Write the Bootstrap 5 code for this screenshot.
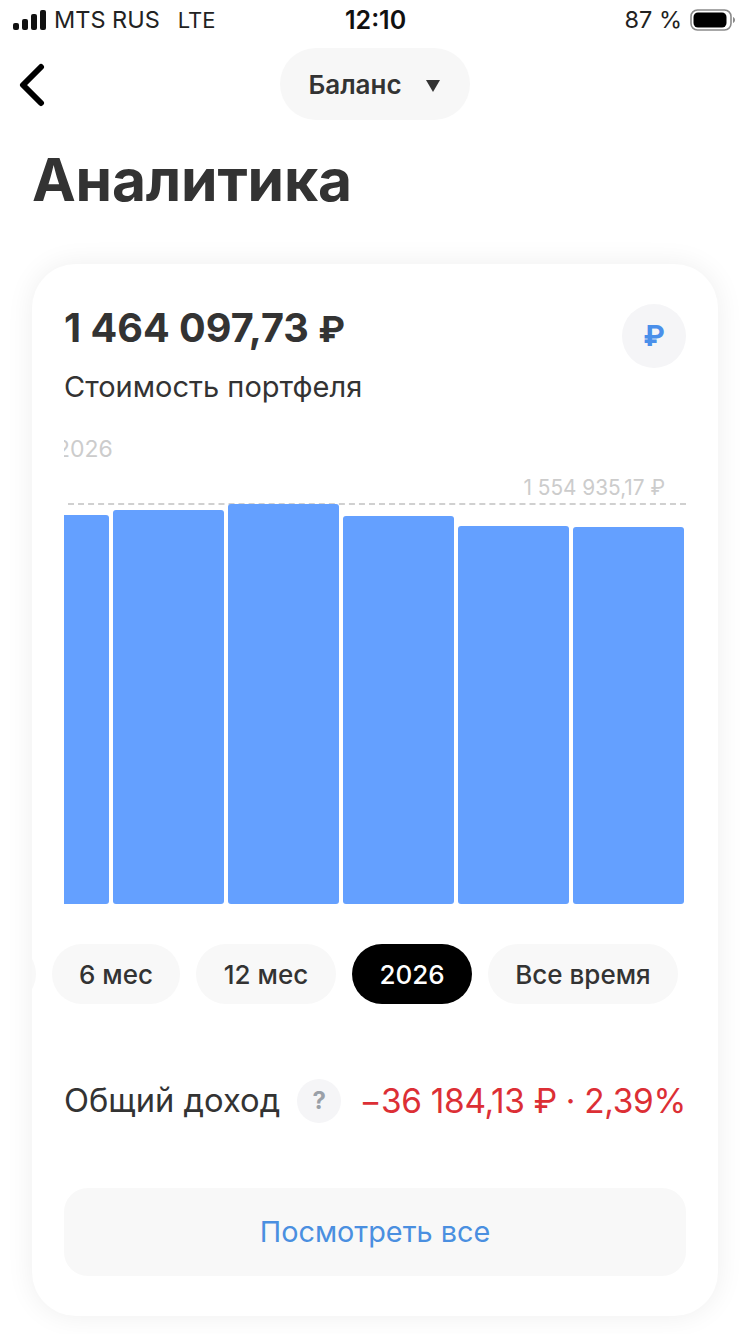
<!DOCTYPE html>
<html lang="ru">
<head>
    <meta charset="UTF-8">
    <meta name="viewport" content="width=device-width, initial-scale=1.0">
    <title>Аналитика</title>
    <link href="https://cdn.jsdelivr.net/npm/bootstrap@5.3.0/dist/css/bootstrap.min.css" rel="stylesheet">
    <style>
        body { width: 750px; height: 1334px; overflow: hidden; background: #fff; font-family: Inter, "Noto Sans", sans-serif; color: #333; }
        .status-row { height: 40px; padding: 0 14px 0 13px; font-size: 23.5px; color: #222; }
        .status-left { width: 290px; gap: 7px; }
        .status-lte { margin-left: 11px; font-size: 22px; }
        .status-time { font-size: 25px; font-weight: 600; color: #111; flex: 1; padding: 2px 0 0 42px; }
        .top-row { height: 72px; margin-top: 8px; }
        .back-link { position: absolute; left: 18px; top: 15px; }
        .balance-pill { width: 190px; height: 72px; background: #f7f7f7; font-size: 26px; font-weight: 600; gap: 24px; padding-right: 2px; }
        .caret-down { width: 0; height: 0; border-left: 7.5px solid transparent; border-right: 7.5px solid transparent; border-top: 12px solid #333; margin-top: 3px; }
        .page-title { font-size: 58.7px; font-weight: 700; line-height: 70px; margin: 25px 0 49px 32px; color: #333; letter-spacing: -.2px; }
        .main-card { width: 686px; height: 1052px; margin-left: 32px; border-radius: 44px; border: 0; box-shadow: 0 0 28px rgba(0,0,0,.07); overflow: hidden; padding: 40px 32px 0; }
        .total-value { font-size: 39.6px; font-weight: 700; line-height: 48px; height: 48px; color: #333; }
        .rub-small { font-size: 36px; }
        .total-label { font-size: 29px; line-height: 34px; margin-top: 18px; color: #333; white-space: nowrap; }
        .currency-round { width: 64px; height: 64px; background: #f5f5f7; color: #4a8fea; font-size: 29px; font-weight: 700; }
        .year-label { font-size: 23px; color: #ccc; line-height: 28px; margin: 31px 0 0 -8px; }
        .chart-clip { overflow: hidden; }
        .max-label { font-size: 20.8px; color: #ccc; line-height: 24px; margin-top: 13px; padding: 0 21px 3px 0; border-bottom: 2px dashed #d0d0d0; margin-left: 4px; height: 29px; white-space: nowrap; }
        .bars-row { height: 400px; gap: 4px; margin-top: -1px; }
        .bar-item { width: 111px; flex: none; background: #64a0ff; border-radius: 3px; }
        .bar-cut { width: 45px; border-radius: 0 3px 3px 0; }
        .pills-row { margin: 40px -32px 0; gap: 16px; }
        .period-pill { height: 60px; background: #f8f8f8; font-size: 26px; font-weight: 500; color: #333; flex: none; }
        .period-pill.is-active { background: #000; color: #fff; }
        .pill-cut { width: 60px; margin-left: -56px; }
        .pill-6 { width: 128px; }
        .pill-12 { width: 140px; }
        .pill-26 { width: 120px; }
        .pill-all { width: 190px; }
        .income-row { margin-top: 75px; height: 44px; font-size: 32.7px; }
        .income-label { color: #333; }
        .help-round { width: 44px; height: 44px; background: #f5f5f7; color: #9aa0a8; font-size: 24px; font-weight: 700; margin-left: 17px; }
        .income-value { color: #dc2f35; margin-left: auto; white-space: nowrap; font-size: 33.4px; letter-spacing: -.3px; }
        .see-all { height: 88px; margin-top: 65px; background: #f8f8f8; border-radius: 24px; color: #4a8fe0; font-size: 28.8px; }
    </style>
</head>
<body>
    <!-- статус бар -->
    <div class="status-row d-flex align-items-center">
        <div class="status-left d-flex align-items-center">
            <svg width="34" height="22" viewBox="0 0 34 22">
                <rect x="0" y="14" width="6" height="7" rx="2" fill="#111"/>
                <rect x="9" y="10" width="6" height="11" rx="2" fill="#111"/>
                <rect x="18" y="5" width="6" height="16" rx="2" fill="#111"/>
                <rect x="27" y="1" width="6" height="20" rx="2" fill="#111"/>
            </svg>
            <span>MTS RUS</span><span class="status-lte">LTE</span>
        </div>
        <div class="status-time">12:10</div>
        <div class="d-flex align-items-center gap-2">
            <span>87 %</span>
            <svg width="46" height="24" viewBox="0 0 46 24">
                <rect x="1" y="2" width="40" height="20" rx="6.5" fill="none" stroke="#8a8a8a" stroke-width="1.6"/>
                <rect x="3.5" y="4.5" width="33" height="15" rx="4.5" fill="#000"/>
                <path d="M43 9v6c1.300-.4 2-1.700 2-3s-.7-2.600-2-3z" fill="#8a8a8a"/>
            </svg>
        </div>
    </div>

    <div class="top-row position-relative d-flex justify-content-center">
        <a href="#" class="back-link">
            <svg width="28" height="44" viewBox="0 0 28 44">
                <path d="M23 4 5 22 23 40" fill="none" stroke="#000" stroke-width="6" stroke-linecap="round" stroke-linejoin="round"/>
            </svg>
        </a>
        <div class="balance-pill rounded-pill d-flex align-items-center justify-content-center">
            <span>Баланс</span><span class="caret-down"></span>
        </div>
    </div>

    <h1 class="page-title">Аналитика</h1>

    <div class="card main-card">
        <div class="d-flex justify-content-between align-items-start">
            <div>
                <div class="total-value">1 464 097,73 <span class="rub-small">₽</span></div>
                <div class="total-label">Стоимость портфеля</div>
            </div>
            <div class="currency-round rounded-circle d-flex align-items-center justify-content-center">₽</div>
        </div>

        <div class="chart-clip">
            <div class="year-label">2026</div>
            <div class="max-label text-end">1 554 935,17 ₽</div>
            <div class="bars-row d-flex align-items-end">
                <div class="bar-item bar-cut" style="height: 389px"></div>
                <div class="bar-item" style="height: 394px"></div>
                <div class="bar-item" style="height: 400px"></div>
                <div class="bar-item" style="height: 388px"></div>
                <div class="bar-item" style="height: 378px"></div>
                <div class="bar-item" style="height: 377px"></div>
            </div>
        </div>

        <div class="pills-row d-flex">
            <div class="period-pill pill-cut rounded-pill"></div>
            <div class="period-pill pill-6 rounded-pill d-flex align-items-center justify-content-center">6 мес</div>
            <div class="period-pill pill-12 rounded-pill d-flex align-items-center justify-content-center">12 мес</div>
            <div class="period-pill pill-26 is-active rounded-pill d-flex align-items-center justify-content-center">2026</div>
            <div class="period-pill pill-all rounded-pill d-flex align-items-center justify-content-center">Все время</div>
        </div>

        <div class="income-row d-flex align-items-center">
            <span class="income-label">Общий доход</span>
            <span class="help-round rounded-circle d-flex align-items-center justify-content-center">?</span>
            <span class="income-value">−36 184,13 ₽ · 2,39%</span>
        </div>

        <div class="see-all d-flex align-items-center justify-content-center">Посмотреть все</div>
    </div>

    <script src="https://cdn.jsdelivr.net/npm/bootstrap@5.3.0/dist/js/bootstrap.bundle.min.js"></script>
</body>
</html>
